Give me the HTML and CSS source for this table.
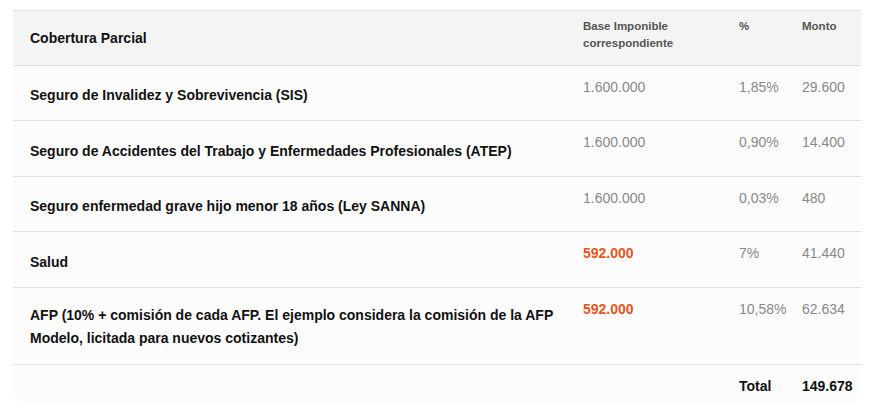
FILE: index.html
```html
<!DOCTYPE html>
<html>
<head>
  <title>Cobertura Parcial</title>
  <link rel="stylesheet" href="styles.css">
</head>
<body>
  <div class="wrap">
    <table class="cobertura">
      <colgroup>
        <col class="c-label">
        <col class="c-base">
        <col class="c-pct">
        <col class="c-monto">
      </colgroup>
      <thead>
        <tr>
          <th class="label">Cobertura Parcial</th>
          <th>Base Imponible correspondiente</th>
          <th>%</th>
          <th>Monto</th>
        </tr>
      </thead>
      <tbody>
        <tr>
          <td class="label">Seguro de Invalidez y Sobrevivencia (SIS)</td>
          <td>1.600.000</td>
          <td>1,85%</td>
          <td>29.600</td>
        </tr>
        <tr>
          <td class="label">Seguro de Accidentes del Trabajo y Enfermedades Profesionales (ATEP)</td>
          <td>1.600.000</td>
          <td>0,90%</td>
          <td>14.400</td>
        </tr>
        <tr>
          <td class="label">Seguro enfermedad grave hijo menor 18 años (Ley SANNA)</td>
          <td>1.600.000</td>
          <td>0,03%</td>
          <td>480</td>
        </tr>
        <tr>
          <td class="label">Salud</td>
          <td class="orange">592.000</td>
          <td>7%</td>
          <td>41.440</td>
        </tr>
        <tr class="tall">
          <td class="label">AFP (10% + comisión de cada AFP. El ejemplo considera la comisión de la AFP Modelo, licitada para nuevos cotizantes)</td>
          <td class="orange">592.000</td>
          <td>10,58%</td>
          <td>62.634</td>
        </tr>
        <tr class="total">
          <td></td>
          <td></td>
          <td>Total</td>
          <td>149.678</td>
        </tr>
      </tbody>
    </table>
  </div>
</body>
</html>
```

FILE: styles.css
```css
body {
  margin: 10px 0 0 13px;
  background: #fff;
  font-family: Arial, "Liberation Sans", sans-serif;
}

.wrap {
  width: 848px;
  background: #fcfcfc;
  border-top: 1px solid #e4e4e4;
  border-radius: 0 0 14px 14px;
  overflow: hidden;
}

.cobertura {
  width: 100%;
  border-collapse: collapse;
  table-layout: fixed;
}

.c-label { width: 560px; }
.c-base { width: 156px; }
.c-pct { width: 63px; }
.c-monto { width: 69px; }

.cobertura th {
  background: #f4f4f4;
  height: 54px;
  padding: 7px 10px 0;
  text-align: left;
  vertical-align: top;
  font-size: 11.5px;
  line-height: 17px;
  color: #555;
  box-sizing: border-box;
  border-bottom: 1px solid #e0e0e0;
}

.cobertura th.label {
  vertical-align: middle;
  padding: 2px 10px 0 17px;
  font-size: 14px;
  color: #111;
}

.cobertura td {
  height: 55.5px;
  padding: 11px 10px 0;
  text-align: left;
  vertical-align: top;
  font-size: 14px;
  line-height: 20px;
  color: #888;
  box-sizing: border-box;
  border-bottom: 1px solid #e0e0e0;
}

.cobertura td.label {
  vertical-align: middle;
  padding: 6px 10px 0 17px;
  font-weight: bold;
  line-height: 23px;
  color: #111;
}

.cobertura td.orange {
  color: #e8561c;
  font-weight: bold;
}

.cobertura tr.tall td {
  height: 77px;
}

.cobertura tr.tall td.label {
  padding-top: 2px;
}

.cobertura tr.total td {
  height: 40px;
  padding-top: 11px;
  border-bottom: none;
  font-weight: bold;
  color: #111;
}
```
